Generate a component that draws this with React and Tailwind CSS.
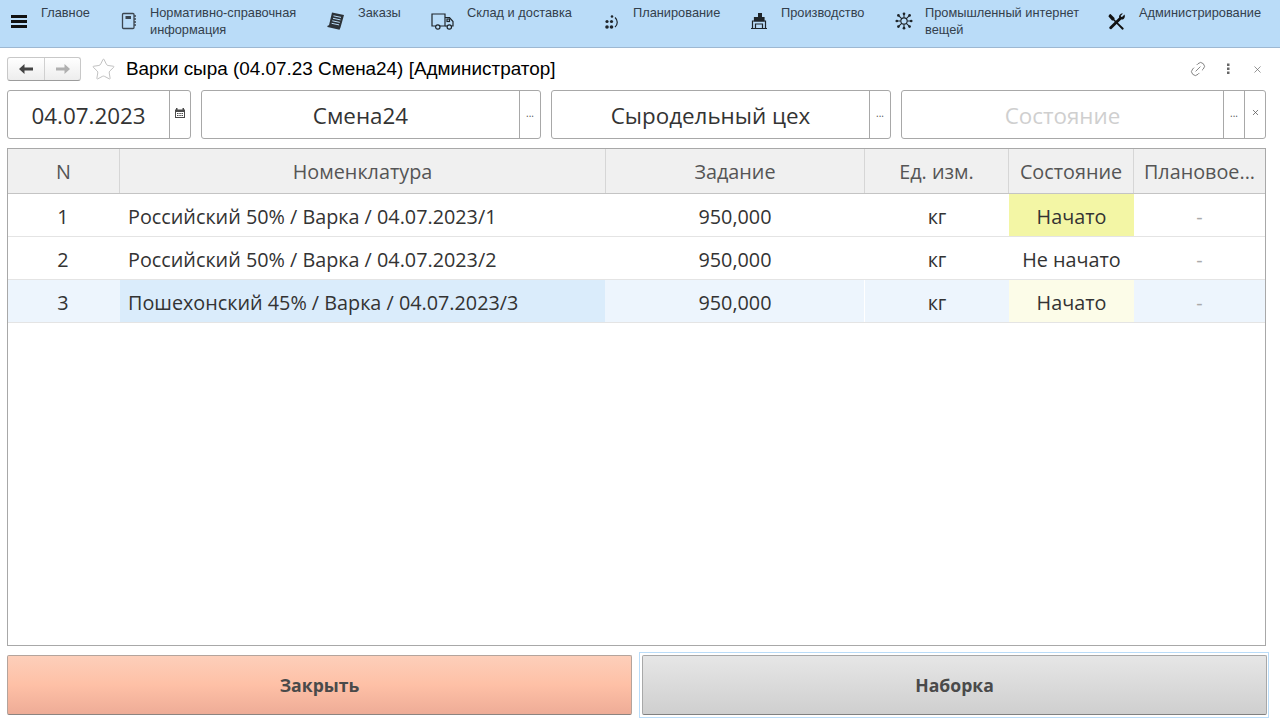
import { Link2, X, Star } from 'lucide-react'

function MenuIcon() {
  return (
    <svg width="18" height="16" viewBox="0 0 18 16" fill="#111">
      <rect x="1" y="2" width="16" height="3" />
      <rect x="1" y="7" width="16" height="3" />
      <rect x="1" y="12" width="16" height="3" />
    </svg>
  )
}

function BookIcon() {
  return (
    <svg width="16" height="18" viewBox="0 0 16 18" fill="none" stroke="#3c4650" strokeWidth="1.3">
      <rect x="1.500" y="1.500" width="11.500" height="15" rx="1" />
      <rect x="4.500" y="4" width="5.500" height="3" fill="#3c4650" stroke="none" />
      <path d="M13 4h2M13 7h2M13 10h2M13 13h2" />
    </svg>
  )
}

function OrdersIcon() {
  return (
    <svg width="18" height="18" viewBox="0 0 18 18">
      <path d="M5 .5l12 2.500-3.500 12.500-1 2.200L0.500 15c-.5-1 .5-2 1.500-1.800z" fill="#2c3238" />
      <path d="M6.500 3.800l7.500 1.600M6 6.300l7.500 1.600M5.300 8.800l7.500 1.600M4.600 11.300l7.500 1.600" stroke="#badcf8" strokeWidth="1" />
    </svg>
  )
}

function TruckIcon() {
  return (
    <svg width="23" height="17" viewBox="0 0 23 17" fill="none" stroke="#1f252a" strokeWidth="1.200">
      <path d="M4.500 13H1V1h13v12H9" />
      <path d="M14 4.500h4.500l3.500 4V13h-1.500M14 13h2" />
      <rect x="16" y="6" width="2.500" height="2.500" />
      <circle cx="6.800" cy="14" r="2.200" />
      <circle cx="18.300" cy="14" r="2.200" />
    </svg>
  )
}

function PlanIcon() {
  return (
    <svg width="16" height="18" viewBox="0 0 16 18" fill="#1f252a">
      <circle cx="8" cy="3.500" r="1.300" />
      <circle cx="3" cy="8.500" r="1.600" />
      <circle cx="7.500" cy="8.500" r="1.600" />
      <circle cx="3" cy="14" r="1.800" />
      <circle cx="7.500" cy="14" r="1.800" />
      <path d="M11 4.500c3 2.500 3 7 0 9.500" fill="none" stroke="#1f252a" strokeWidth="1.200" />
    </svg>
  )
}

function FactoryIcon() {
  return (
    <svg width="16" height="16" viewBox="0 0 16 16" fill="none" stroke="#1f252a" strokeWidth="1.200">
      <rect x="7" y="0" width="4" height="4" fill="#1f252a" stroke="none" />
      <path d="M3.500 8V4.500h9.500V8z" fill="#1f252a" />
      <path d="M1.500 15.500V8h13v7.500" />
      <path d="M4.500 15.500V11h7v4.500M0 15.500h16" />
    </svg>
  )
}

function IotIcon() {
  return (
    <svg width="18" height="18" viewBox="0 0 20 20" fill="none" stroke="#1f252a" strokeWidth="1.200">
      <circle cx="10" cy="10" r="3.500" />
      <path d="M10 1.500v5M10 13.500v5M1.500 10h5M13.500 10h5M4 4l3.700 3.700M16 4l-3.700 3.700M4 16l3.700-3.700M16 16l-3.700-3.700" />
      <g fill="#1f252a" stroke="none">
        <circle cx="10" cy="2" r="1.500" />
        <circle cx="10" cy="18" r="1.500" />
        <circle cx="2" cy="10" r="1.500" />
        <circle cx="18" cy="10" r="1.500" />
        <circle cx="3.800" cy="3.800" r="1.500" />
        <circle cx="16.200" cy="3.800" r="1.500" />
        <circle cx="3.800" cy="16.200" r="1.500" />
        <circle cx="16.200" cy="16.200" r="1.500" />
      </g>
    </svg>
  )
}

function ToolsIcon() {
  return (
    <svg width="18" height="18" viewBox="0 0 18 18" fill="#111">
      <path d="M2.500 1l4 4v1.500L15.500 15c.8.8-.7 2.300-1.500 1.500L5.500 7.500H4L0.500 3.500c0-1 1-2.500 2-2.500z" />
      <path d="M16.500 1.500l-2.500 2.500-1-.2-.3-1L15 .5c-2-.5-4.500 1.500-3.800 4L1.500 14c-1 1 1 3 2 2l9.700-9.500c2.300.6 4.600-2.200 3.300-5z" />
    </svg>
  )
}

function CalendarIcon() {
  return (
    <svg width="10" height="10" viewBox="0 0 10 10" fill="#4a4a4a">
      <rect x="1" y="0" width="1.500" height="2" />
      <rect x="7.500" y="0" width="1.500" height="2" />
      <path d="M0 1.500h10V10H0zM1 4v5h8V4z" fillRule="evenodd" />
      <path d="M2 5h1.500v1H2zM4.300 5h1.500v1H4.300zM6.500 5H8v1H6.500zM2 7h1.500v1H2zM4.300 7h1.500v1H4.300zM6.500 7H8v1H6.500z" />
    </svg>
  )
}

function NavArrow({ color, flip }) {
  return (
    <svg width="14" height="10" viewBox="0 0 14 10" fill={color} className={flip ? 'rotate-180' : ''}>
      <path d="M0 5l5.500-5v3.500H14v3H5.500V10z" />
    </svg>
  )
}

function KebabIcon() {
  return (
    <svg width="4" height="12" viewBox="0 0 4 12" fill="#666">
      <rect x="1" y="0.500" width="2.500" height="2.500" />
      <rect x="1" y="4.500" width="2.500" height="2.500" />
      <rect x="1" y="8.500" width="2.500" height="2.500" />
    </svg>
  )
}

const navItems = [
  { icon: MenuIcon, label: 'Главное', className: 'w-[120px] pl-[10px]', iconClass: 'w-[31px] pt-[13px]' },
  { icon: BookIcon, label: 'Нормативно-справочная информация', className: 'w-[206px]', iconClass: 'w-[30px] pl-[1px] pt-[12px]' },
  { icon: OrdersIcon, label: 'Заказы', className: 'w-[104px]', iconClass: 'w-[32px] pl-[1px] pt-[12px]' },
  { icon: TruckIcon, label: 'Склад и доставка', className: 'w-[174px]', iconClass: 'w-[37px] pl-[1px] pt-[13px]' },
  { icon: PlanIcon, label: 'Планирование', className: 'w-[146px]', iconClass: 'w-[29px] pt-[13px]' },
  { icon: FactoryIcon, label: 'Производство', className: 'w-[144px]', iconClass: 'w-[31px] pl-[1px] pt-[13px]' },
  { icon: IotIcon, label: 'Промышленный интернет вещей', className: 'w-[213px]', iconClass: 'w-[31px] pl-[1px] pt-[12px]' },
  { icon: ToolsIcon, label: 'Администрирование', className: 'flex-1', iconClass: 'w-[32px] pl-[1px] pt-[13px]' },
]

const columns = [
  { title: 'N', className: 'w-[112px]' },
  { title: 'Номенклатура', className: 'w-[486px]' },
  { title: 'Задание', className: 'w-[259px]' },
  { title: 'Ед. изм.', className: 'w-[144px]' },
  { title: 'Состояние', className: 'w-[125px]' },
  { title: 'Плановое...', className: 'flex-1' },
]

const rows = [
  { n: '1', name: 'Российский 50% / Варка / 04.07.2023/1', state: 'Начато', stateBg: 'bg-[#f3f6a5]' },
  { n: '2', name: 'Российский 50% / Варка / 04.07.2023/2', state: 'Не начато', stateBg: '' },
  { n: '3', name: 'Пошехонский 45% / Варка / 04.07.2023/3', state: 'Начато', stateBg: 'bg-[#fcfce8]', selected: true },
]

function Field({ value, className, placeholder, children }) {
  return (
    <div className={`flex h-[49px] rounded-[3px] border border-[#a8a8a8] bg-white ${className}`}>
      <div className={`flex flex-1 items-center justify-center pt-[2px] text-[22.4px] ${placeholder ? 'text-[#cfcfcf]' : 'text-[#333]'}`}>
        {value}
      </div>
      {children}
    </div>
  )
}

function FieldButton({ children, className = 'w-[21px]' }) {
  return (
    <div className={`flex items-center justify-center border-l border-[#a8a8a8] pb-[4px] text-[#555] ${className}`}>
      {children}
    </div>
  )
}

const Dots = () => <span className="text-[10px] leading-none">...</span>

export default function App() {
  return (
    <div className="flex h-[720px] w-[1280px] flex-col overflow-hidden bg-white font-['Open_Sans',sans-serif]">
      <nav className="flex h-[48px] shrink-0 border-b border-[#9db8d2] bg-[#badcf8] font-['Liberation_Sans',sans-serif] text-[12.8px] leading-[17px] text-[#33404c]">
        {navItems.map((item) => {
          const Icon = item.icon
          return (
            <div key={item.label} className={`flex ${item.className}`}>
              <div className={`shrink-0 ${item.iconClass}`}>
                <Icon />
              </div>
              <div className="max-w-[165px] pt-[4px]">{item.label}</div>
            </div>
          )
        })}
      </nav>

      <div className="flex h-[42px] shrink-0 items-center pl-[7px] pr-[17px]">
        <div className="flex h-[24px] w-[74px] items-center rounded-[3px] border border-[#c8c8c8] border-b-[#9c9c9c] bg-gradient-to-b from-white to-[#ededed]">
          <div className="flex h-full w-[37px] items-center justify-center border-r border-[#d0d0d0]">
            <NavArrow color="#444" />
          </div>
          <div className="flex flex-1 justify-center">
            <NavArrow color="#b0b0b0" flip />
          </div>
        </div>
        <Star size={25} strokeWidth={0.8} color="#b5b5b5" className="ml-[10px]" />
        <h1 className="ml-[10px] font-['Liberation_Sans',sans-serif] text-[18.9px] font-normal text-black">
          Варки сыра (04.07.23 Смена24) [Администратор]
        </h1>
        <div className="ml-auto flex items-center text-[#666]">
          <Link2 size={18} strokeWidth={1} className="-rotate-45" />
          <div className="ml-[19px]">
            <KebabIcon />
          </div>
          <X size={11} strokeWidth={1.500} className="ml-[22px]" />
        </div>
      </div>

      <div className="flex shrink-0 gap-[10px] px-[7px]">
        <Field value="04.07.2023" className="w-[184px]">
          <FieldButton>
            <CalendarIcon />
          </FieldButton>
        </Field>
        <Field value="Смена24" className="w-[340px]">
          <FieldButton><Dots /></FieldButton>
        </Field>
        <Field value="Сыродельный цех" className="w-[340px]">
          <FieldButton><Dots /></FieldButton>
        </Field>
        <Field value="Состояние" placeholder className="w-[365px]">
          <FieldButton><Dots /></FieldButton>
          <FieldButton><X size={9} strokeWidth={2} /></FieldButton>
        </Field>
      </div>

      <div className="mx-[7px] mt-[9px] flex h-[498px] w-[1259px] shrink-0 flex-col border border-[#a8a8a8]">
        <div className="flex h-[45px] shrink-0 border-b border-[#c4c4c4] bg-[#f0f0f0] text-[19.800px] text-[#555]">
          {columns.map((col, i) => (
            <div
              key={col.title}
              className={`flex items-center justify-center pt-[1px] ${col.className} ${i < columns.length - 1 ? 'border-r border-[#d6d6d6]' : ''}`}
            >
              {col.title}
            </div>
          ))}
        </div>
        {rows.map((row) => (
          <div
            key={row.n}
            className={`flex h-[43px] shrink-0 border-b border-[#e4e4e4] text-[19.800px] text-[#333] ${row.selected ? 'bg-[#edf5fd]' : ''}`}
          >
            <div className="flex w-[112px] items-center justify-center pt-[3px] pr-[2px]">{row.n}</div>
            <div className={`flex w-[485px] items-center pl-[8px] pt-[3px] ${row.selected ? 'bg-[#daecfb]' : ''}`}>
              {row.name}
            </div>
            <div className={`ml-[1px] flex w-[259px] items-center justify-center border-r pt-[3px] ${row.selected ? 'border-white' : 'border-transparent'}`}>950,000</div>
            <div className="flex w-[144px] items-center justify-center pt-[3px]">кг</div>
            <div className={`flex w-[125px] items-center justify-center pt-[3px] ${row.stateBg}`}>{row.state}</div>
            <div className="flex flex-1 items-center justify-center pt-[3px] text-[#aaa]">-</div>
          </div>
        ))}
      </div>

      <div className="mt-[9px] flex shrink-0 gap-[7px] px-[7px]">
        <button className="h-[60px] w-[625px] rounded-[2px] border border-[#b4a49c] border-b-[#8c8480] bg-gradient-to-b from-[#fdcfba] via-[#fec0a6] to-[#eeac97] text-[17.6px] font-bold text-[#4a4a4a]">
          Закрыть
        </button>
        <div className="-my-[3px] border border-[#badcf8] pb-[2px] pl-[2px] pr-[1px] pt-[2px]">
          <button className="block h-[60px] w-[625px] rounded-[2px] border border-[#a8a8a8] border-b-[#808080] bg-gradient-to-b from-[#e6e6e6] to-[#cfcfcf] text-[17.6px] font-bold text-[#4a4a4a]">
            Наборка
          </button>
        </div>
      </div>
    </div>
  )
}
